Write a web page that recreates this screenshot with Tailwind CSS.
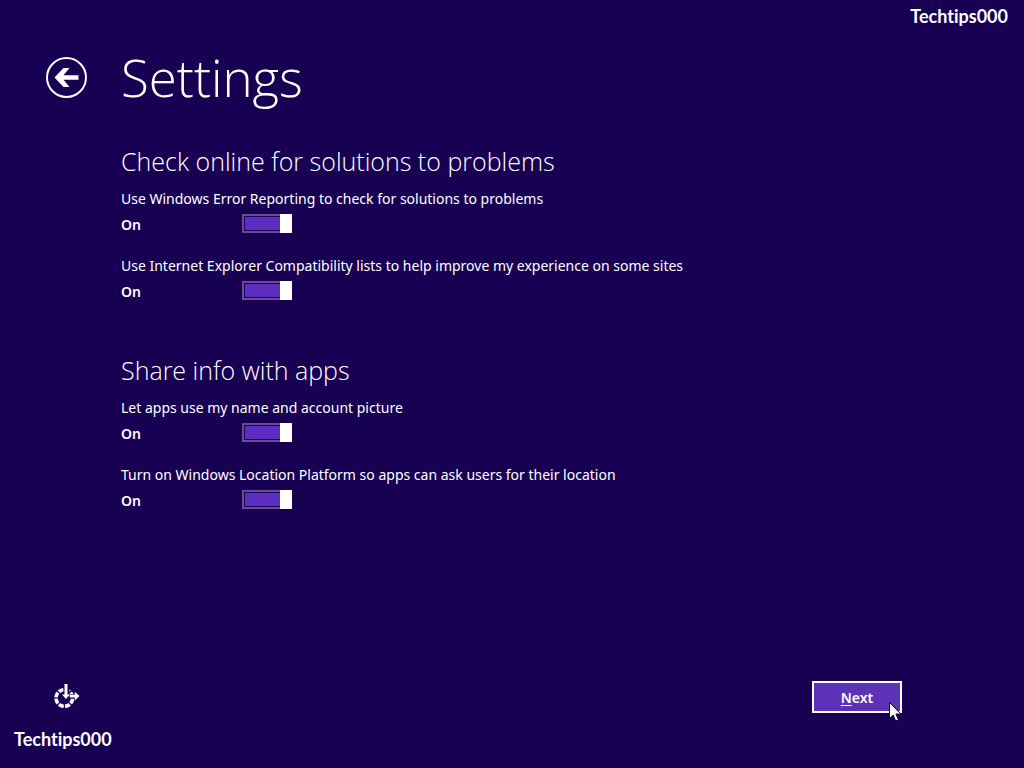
<!DOCTYPE html>
<html lang="en">
<head>
  <meta charset="UTF-8" />
  <meta name="viewport" content="width=device-width, initial-scale=1.0"/>
  <title>Settings</title>
  <script src="https://cdn.jsdelivr.net/npm/@tailwindcss/browser@4"></script>
</head>
<body class="min-h-screen flex flex-col bg-[#180052] text-white font-['Noto_Sans','Open_Sans',sans-serif]">

<p class="h-8 px-4 text-right text-[18px] leading-8 font-bold font-['Lato',sans-serif] [font-variant-ligatures:none]">Techtips000</p>

<header class="flex items-center pl-[46px] h-[90px]">
  <button type="button" aria-label="Back" class="w-[75px]">
    <svg class="w-[41px] h-[41px]" viewBox="0 0 41 41" fill="none">
      <circle cx="20.5" cy="20.5" r="19.5" stroke="#fff" stroke-width="2"/>
      <path d="M8.500 20.500 17.500 11h6l-6 7.200h15v4.600h-15l6 7.200h-6z" fill="#fff"/>
    </svg>
  </button>
  <h1 class="text-[51px] leading-[72px] font-light font-['Open_Sans',sans-serif]">Settings</h1>
</header>

<!-- Setting groups -->
<main class="flex-1 pl-[121px] pr-8 pt-[21px]">
  <section>
    <h2 class="text-[25px] leading-9 font-light font-['Open_Sans',sans-serif]">Check online for solutions to problems</h2>
    <div class="pt-2 h-[67px]">
      <label for="error-reporting" class="block text-[14px] leading-6">Use Windows Error Reporting to check for solutions to problems</label>
      <div class="flex items-start">
        <span class="w-[121px] text-[14px] leading-6 pt-0.5 font-semibold">On</span>
        <input id="error-reporting" type="checkbox" checked class="appearance-none relative mt-[3px] w-[50px] h-[19px] border-2 border-[#6b4a9b] p-px bg-clip-content checked:bg-[#5b2dc0] after:absolute after:-top-0.5 after:-right-0.5 after:w-3 after:h-[19px] after:bg-white">
      </div>
    </div>
    <div class="pt-2 h-[67px]">
      <label for="compat-lists" class="block text-[14px] leading-6">Use Internet Explorer Compatibility lists to help improve my experience on some sites</label>
      <div class="flex items-start">
        <span class="w-[121px] text-[14px] leading-6 pt-0.5 font-semibold">On</span>
        <input id="compat-lists" type="checkbox" checked class="appearance-none relative mt-[3px] w-[50px] h-[19px] border-2 border-[#6b4a9b] p-px bg-clip-content checked:bg-[#5b2dc0] after:absolute after:-top-0.5 after:-right-0.5 after:w-3 after:h-[19px] after:bg-white">
      </div>
    </div>
  </section>

  <section class="mt-[39px]">
    <h2 class="text-[25px] leading-9 font-light font-['Open_Sans',sans-serif]">Share info with apps</h2>
    <div class="pt-2 h-[67px]">
      <label for="name-picture" class="block text-[14px] leading-6">Let apps use my name and account picture</label>
      <div class="flex items-start">
        <span class="w-[121px] text-[14px] leading-6 pt-0.5 font-semibold">On</span>
        <input id="name-picture" type="checkbox" checked class="appearance-none relative mt-[3px] w-[50px] h-[19px] border-2 border-[#6b4a9b] p-px bg-clip-content checked:bg-[#5b2dc0] after:absolute after:-top-0.5 after:-right-0.5 after:w-3 after:h-[19px] after:bg-white">
      </div>
    </div>
    <div class="pt-2 h-[67px]">
      <label for="location" class="block text-[14px] leading-6">Turn on Windows Location Platform so apps can ask users for their location</label>
      <div class="flex items-start">
        <span class="w-[121px] text-[14px] leading-6 pt-0.5 font-semibold">On</span>
        <input id="location" type="checkbox" checked class="appearance-none relative mt-[3px] w-[50px] h-[19px] border-2 border-[#6b4a9b] p-px bg-clip-content checked:bg-[#5b2dc0] after:absolute after:-top-0.5 after:-right-0.5 after:w-3 after:h-[19px] after:bg-white">
      </div>
    </div>
  </section>
</main>

<footer>
  <div class="flex items-center justify-between pl-[53px] pr-[122px]">
    <button type="button" aria-label="Ease of access">
      <svg class="w-[27px] h-[26px]" viewBox="0 0 27 26" fill="none">
        <circle cx="11.300" cy="14" r="8.300" stroke="#fff" stroke-width="3.600" stroke-dasharray="5.200 1.300" stroke-dashoffset="-.6" pathLength="52"/>
        <path d="M10.500 0h6v10.200h5v4.300H16V11h-5.500z" fill="#180052"/>
        <path d="M11.500 0h3v10.500h2.500L13 15 9 10.500h2.500z" fill="#fff"/>
        <path d="M16.800 10.800h5V7.800l4.700 4.300-4.700 4.300v-3h-5z" fill="#fff"/>
      </svg>
    </button>
    <div class="relative">
      <button type="button" accesskey="n" class="w-[90px] h-8 pt-px border-2 border-white bg-[#5c33b8] text-[14px] leading-5 font-semibold"><span class="underline underline-offset-2">N</span>ext</button>
      <!-- Pointer -->
      <svg class="absolute left-[77px] top-[21px] w-[13px] h-[20px]" viewBox="0 0 13 20">
        <path d="M.5.5v16l3.700-3.500 2.500 6 2.700-1.200-2.500-5.800h5.100z" fill="#fff" stroke="#180052" stroke-width="1"/>
      </svg>
    </div>
  </div>
  <p class="px-3.5 pt-2.5 pb-[13px] text-[18px] leading-8 font-bold font-['Lato',sans-serif] [font-variant-ligatures:none]">Techtips000</p>
</footer>

</body>
</html>
